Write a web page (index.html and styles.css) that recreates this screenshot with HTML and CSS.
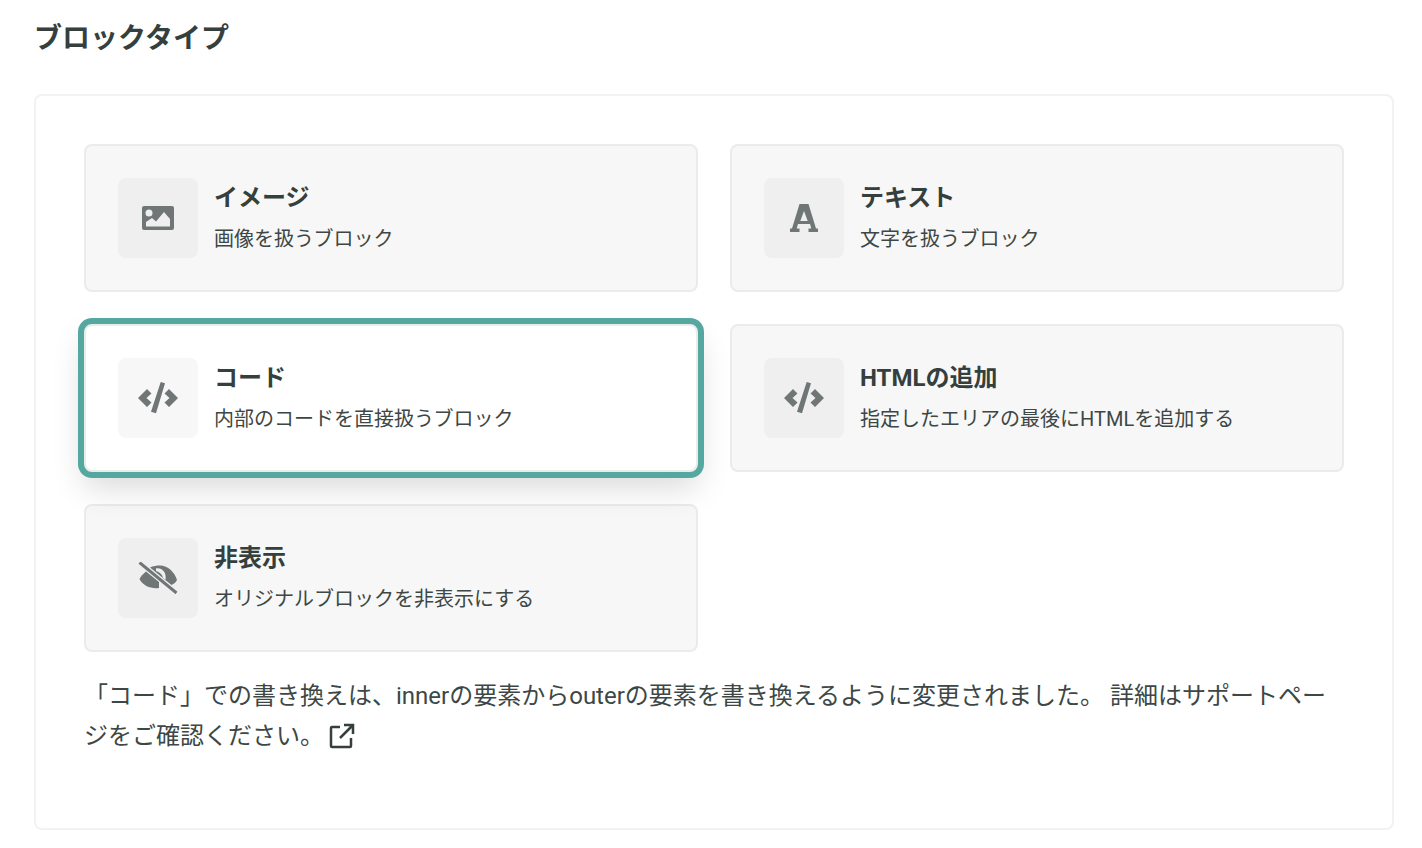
FILE: index.html
```html
<!DOCTYPE html>
<html lang="ja">
<head>
<meta charset="utf-8">
<title>ブロックタイプ</title>
<link rel="stylesheet" href="styles.css">
</head>
<body>
<h2 class="heading">ブロックタイプ</h2>
<section class="panel">
  <div class="grid">
    <div class="card">
      <div class="icon"><svg class="glyph" viewBox="0 0 32 24"><path fill-rule="evenodd" d="M2 0h28a2 2 0 0 1 2 2v20a2 2 0 0 1-2 2H2a2 2 0 0 1-2-2V2a2 2 0 0 1 2-2zM4 20.500V16l6-4 4 3.500L22 6l6 7v7.500zM7 3.500a3.500 3.500 0 1 0 0 7 3.500 3.500 0 0 0 0-7z"/></svg></div>
      <div class="text"><div class="name">イメージ</div><div class="desc">画像を扱うブロック</div></div>
    </div>
    <div class="card">
      <div class="icon"><svg class="glyph letter" viewBox="0 0 28 28"><path fill-rule="evenodd" d="M9.500 0h9l7.500 24.500h2V28H18.500v-3.500h2.800L20 20H8l-1.300 4.500h2.800V28H0v-3.500h2zM14 7l-3.700 10h7.400z"/></svg></div>
      <div class="text"><div class="name">テキスト</div><div class="desc">文字を扱うブロック</div></div>
    </div>
    <div class="card selected">
      <div class="icon"><svg class="glyph wide" viewBox="0 0 40 32"><path d="M22.700 0 27 1.300 18 31.300 13 29.700zM9 7l4.500 4.500-5 4.500 5 4.500L9 25 0 16zM31 7l9 9-9 9-4.500-4.500 5-4.500-5-4.500z"/></svg></div>
      <div class="text"><div class="name">コード</div><div class="desc">内部のコードを直接扱うブロック</div></div>
    </div>
    <div class="card">
      <div class="icon"><svg class="glyph wide" viewBox="0 0 40 32"><path d="M22.700 0 27 1.300 18 31.300 13 29.700zM9 7l4.500 4.500-5 4.500 5 4.500L9 25 0 16zM31 7l9 9-9 9-4.500-4.500 5-4.500-5-4.500z"/></svg></div>
      <div class="text"><div class="name">HTMLの追加</div><div class="desc">指定したエリアの最後にHTMLを追加する</div></div>
    </div>
    <div class="card">
      <div class="icon"><svg class="glyph wide" viewBox="0 0 40 32"><path fill-rule="evenodd" d="M12 5.500C15 4 19 3.500 22 3.500c8 0 14.500 6.500 17 14.500-1 2-3 4-5.500 5zM18 6.500c6-1 11 4 9.500 12l-2.500-2c0-3-3-6.500-7-7.500z"/><path d="M1.500 17C2.500 14.500 5 12 8 9.500L21 20v6C13 27 5 24 1.500 17z"/><path class="slash" d="M1.500 0.500l37 30.500"/></svg></div>
      <div class="text"><div class="name">非表示</div><div class="desc">オリジナルブロックを非表示にする</div></div>
    </div>
  </div>
  <p class="note">「コード」での書き換えは、innerの要素からouterの要素を書き換えるように変更されました。 詳細はサポートページをご確認ください。<svg class="external" viewBox="0 0 26 26" width="26" height="26"><path d="M11 4H3a1 1 0 0 0-1 1v18a1 1 0 0 0 1 1h18a1 1 0 0 0 1-1v-8M15 2h9v9M24 2 11 15"/></svg></p>
</section>
</body>
</html>
```
FILE: styles.css
```css
* { box-sizing: border-box; }
html, body { margin: 0; background: #fff; }
body {
  width: 1422px;
  height: 848px;
  overflow: hidden;
  padding: 0 28px 0 34px;
  font-family: Roboto, "Noto Sans CJK JP", sans-serif;
  color: #353f3d;
}
.heading {
  margin: 0;
  height: 94px;
  padding-top: 18px;
  font-size: 28px;
  line-height: 42px;
  font-weight: 700;
}
.panel {
  width: 1360px;
  height: 736px;
  border: 2px solid #f2f2f2;
  border-radius: 8px;
  padding: 48px;
}
.grid {
  display: grid;
  grid-template-columns: 614px 614px;
  grid-auto-rows: 148px;
  gap: 32px;
}
.card {
  display: flex;
  align-items: center;
  gap: 16px;
  padding: 32px;
  background: #f7f7f7;
  border: 2px solid #ebebeb;
  border-radius: 8px;
}
.selected {
  background: #fff;
  box-shadow: 0 0 0 6px #55a89f, 0 16px 32px rgba(0, 0, 0, 0.15);
  position: relative;
}
.icon {
  flex: none;
  width: 80px;
  height: 80px;
  border-radius: 8px;
  background: #efefef;
  display: flex;
  align-items: center;
  justify-content: center;
}
.selected .icon { background: #f7f7f7; }
.glyph { width: 32px; fill: #6f7675; }
.letter { width: 28px; }
.wide { width: 40px; }
.slash { fill: none; stroke: #6f7675; stroke-width: 3; }
.text { padding-bottom: 2px; }
.name {
  font-size: 24px;
  line-height: 36px;
  font-weight: 700;
}
.desc {
  margin-top: 8px;
  font-size: 20px;
  line-height: 30px;
  color: #3d4745;
}
.note {
  margin: 24px 0 0;
  font-size: 24px;
  line-height: 40px;
  width: 1260px;
  color: #3d4745;
}
.external {
  vertical-align: -5px;
  margin-left: 5px;
  fill: none;
  stroke: #353f3d;
  stroke-width: 2.5;
}
```
